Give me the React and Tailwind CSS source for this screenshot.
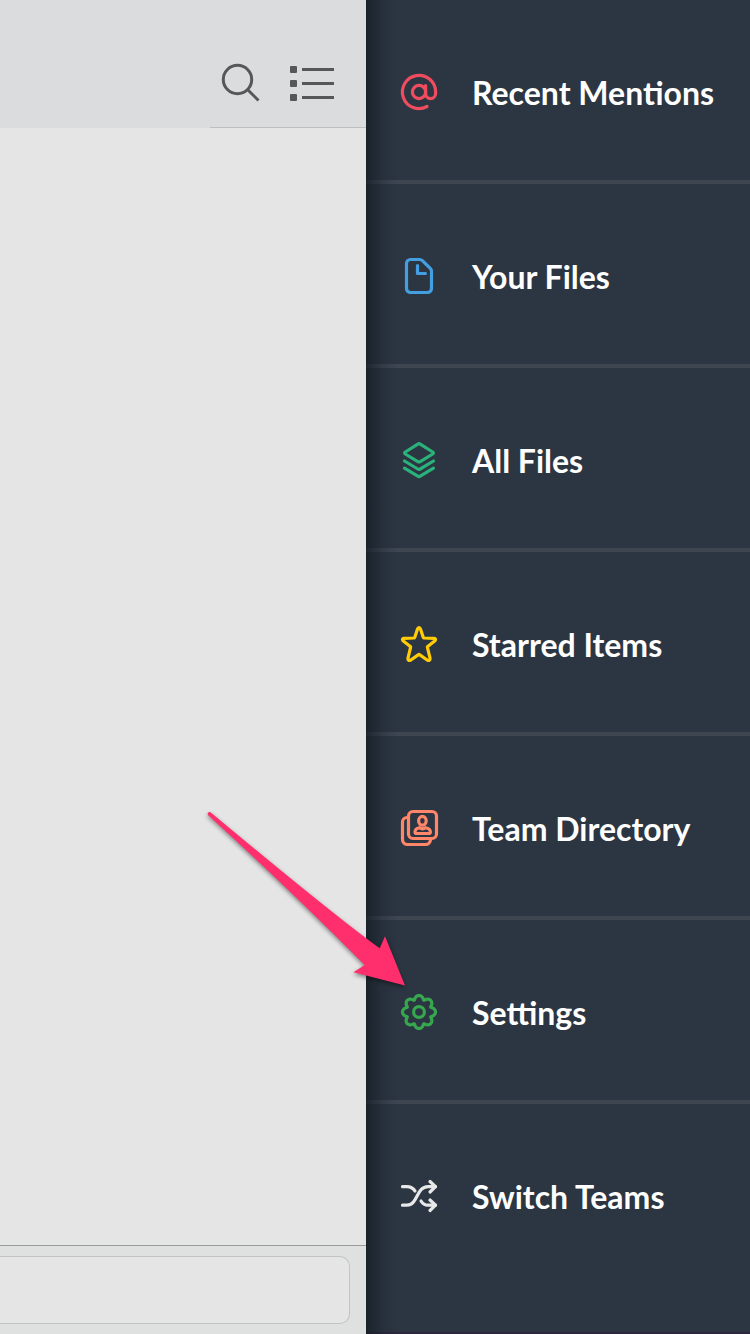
import React from "react";

const gearPath =
  Array.from({ length: 144 }, (_, i) => {
    const a = (i / 144) * Math.PI * 2;
    const t = a + 0.065 * Math.sin(8 * a);
    const r = 14.6 + 1.9 * Math.cos(8 * a);
    return `${i ? "L" : "M"}${(20 + r * Math.cos(t)).toFixed(2)} ${(20 + r * Math.sin(t)).toFixed(2)}`;
  }).join("") + "Z";

const items = [
  {
    label: "Recent Mentions",
    color: "text-[#f04c60]",
    icon: (
      <>
        <circle cx="20" cy="20" r="6.6" />
        <path d="M26.6 13.6V21.6a5 5 0 0 0 10 0V20A16.6 16.6 0 1 0 28 34.5" />
      </>
    ),
  },
  {
    label: "Your Files",
    color: "text-[#439fe0]",
    icon: (
      <>
        <path d="M11.5 3.5H20.6a4 4 0 0 1 2.8 1.2L31.3 12.4a4 4 0 0 1 1.2 2.8V32.5a4 4 0 0 1-4 4H11.5a4 4 0 0 1-4-4V7.5a4 4 0 0 1 4-4Z" />
        <path d="M18.5 9.5V17.5H26.5" />
      </>
    ),
  },
  {
    label: "All Files",
    color: "text-[#2ab27b]",
    icon: (
      <>
        <path d="M18.8 4.1Q20 3.3 21.2 4.1L33.7 12Q35.2 13 33.7 14L21.2 21.6Q20 22.3 18.8 21.6L6.3 14Q4.8 13 6.3 12Z" />
        <path d="M5.5 21L18.8 29Q20 29.7 21.2 29L34.5 21" />
        <path d="M5.5 28.2L18.8 36.2Q20 36.9 21.2 36.2L34.5 28.2" />
      </>
    ),
  },
  {
    label: "Starred Items",
    color: "text-[#ffcc05]",
    icon: (
      <path d="M18.7 4.5Q20 2.5 21.3 4.5L24.3 13.5Q24.5 14 25 14L35 14.3Q37.5 14.7 36 16.7L28.7 22.5Q28.3 22.9 28.4 23.3L31.1 34.3Q31.1 37.2 28.5 36.2L20.5 30.6Q20 30.2 19.5 30.6L11.5 36.2Q8.9 37.2 8.9 34.3L11.6 23.3Q11.7 22.9 11.3 22.5L4 16.7Q2.5 14.7 5 14.3L15 14Q15.5 14 15.7 13.5Z" />
    ),
  },
  {
    label: "Team Directory",
    color: "text-[#ff8669]",
    icon: (
      <>
        <rect x="9.5" y="3.5" width="28" height="27" rx="4.5" />
        <path d="M9.5 9.5H8a4.5 4.5 0 0 0-4.5 4.5V31.5a5 5 0 0 0 5 5H26.5a5 5 0 0 0 5-5V30.5" />
        <ellipse cx="23.4" cy="12.8" rx="3.8" ry="4.4" />
        <path d="M20.3 19.7C17.5 20.3 16 22 16 24Q16 25.5 17.6 25.5H29.8Q31.4 25.5 31.4 24C31.4 22 29.8 20.3 26.6 19.7Q23.5 21.8 20.3 19.7Z" />
      </>
    ),
  },
  {
    label: "Settings",
    color: "text-[#36a64f]",
    icon: (
      <>
        <path d={gearPath} />
        <circle cx="20" cy="20" r="5.4" />
      </>
    ),
  },
  {
    label: "Switch Teams",
    color: "text-[#e8e8e8]",
    icon: (
      <>
        <path d="M3.5 10.7H8Q13 10.7 16 15" />
        <path d="M3.5 29.2H8C19 29.2 17 10.7 29 10.7H36.5" />
        <path d="M22 25Q24.5 29.2 29 29.2H36.5" />
        <path d="M31 5.5L36.5 10.7L31 16M31 24L36.5 29.2L31 34.5" />
      </>
    ),
  },
];

function MenuItem({ label, color, icon, last }) {
  return (
    <li
      className={`flex items-center h-[184px] pl-[33px] pt-1 border-b-4 ${last ? "border-transparent" : "border-[#3d4651]"}`}
    >
      <svg
        className={`size-10 shrink-0 ${color}`}
        viewBox="0 0 40 40"
        fill="none"
        stroke="currentColor"
        strokeWidth="3.2"
        strokeLinecap="round"
        strokeLinejoin="round"
      >
        {icon}
      </svg>
      <span className="ml-[33px] pt-0.5 text-[32px] leading-10 font-bold text-white whitespace-nowrap">
        {label}
      </span>
    </li>
  );
}

export default function App() {
  return (
    <div className="relative flex w-[750px] h-[1334px] overflow-hidden bg-[#2c3642] font-[Lato,sans-serif]">
      <main className="flex flex-col w-[366px] shrink-0 bg-[#e5e5e5]">
        <header className="flex flex-col h-32 shrink-0 bg-[#dbdcde]">
          <div className="flex grow items-start justify-end gap-[27px] pt-[62px] pr-[31px]">
            <svg className="w-[42px] h-[42px]" viewBox="0 0 42 42" fill="none" stroke="#565759" strokeWidth="3">
              <circle cx="17.5" cy="17.5" r="14.2" />
              <path d="M27.5 27.5L38.5 38.5" />
            </svg>
            <svg className="w-[46px] h-[42px]" viewBox="0 0 46 42" fill="#565759">
              <rect x="1" y="4" width="7" height="7" rx="1" />
              <rect x="1" y="18" width="7" height="7" rx="1" />
              <rect x="1" y="32" width="7" height="7" rx="1" />
              <rect x="13" y="6" width="32" height="3" />
              <rect x="13" y="20" width="32" height="3" />
              <rect x="13" y="34" width="32" height="3" />
            </svg>
          </div>
          <div className="h-px ml-[210px] bg-[#bebfc0]" />
        </header>
        <div className="grow" />
        <footer className="h-[89px] shrink-0 border-t border-[#999b9b] bg-[#dfe1e0] pt-[10px] pr-4">
          <div className="h-[68px] rounded-r-[10px] border border-l-0 border-[#c3c4c4] bg-[#e5e5e5]" />
        </footer>
      </main>
      <nav className="flex flex-col justify-between grow">
        <ul>
          {items.map((item, i) => (
            <MenuItem key={item.label} {...item} last={i === items.length - 1} />
          ))}
        </ul>
        <div className="h-0.5 bg-[#2d2640]" />
      </nav>
      <div className="absolute left-[366px] top-0 h-full w-8 bg-linear-to-r from-[#111a20]/70 via-[#18212a]/30 to-transparent" />
      <svg
        className="absolute left-[190px] top-[800px] w-[230px] h-[200px] drop-shadow-[0_2px_2px_rgba(0,0,0,0.45)]"
        viewBox="0 0 230 200"
        fill="#ff2f6d"
      >
        <path d="M20.5 12.2Q18.5 11.8 17.7 13.5Q17.5 15 18.7 15.8Q95 85 174.7 165L163.5 172.3L215 185.5L195 136.2L189.7 148.3Q145 116 20.5 12.2Z" />
      </svg>
    </div>
  );
}
